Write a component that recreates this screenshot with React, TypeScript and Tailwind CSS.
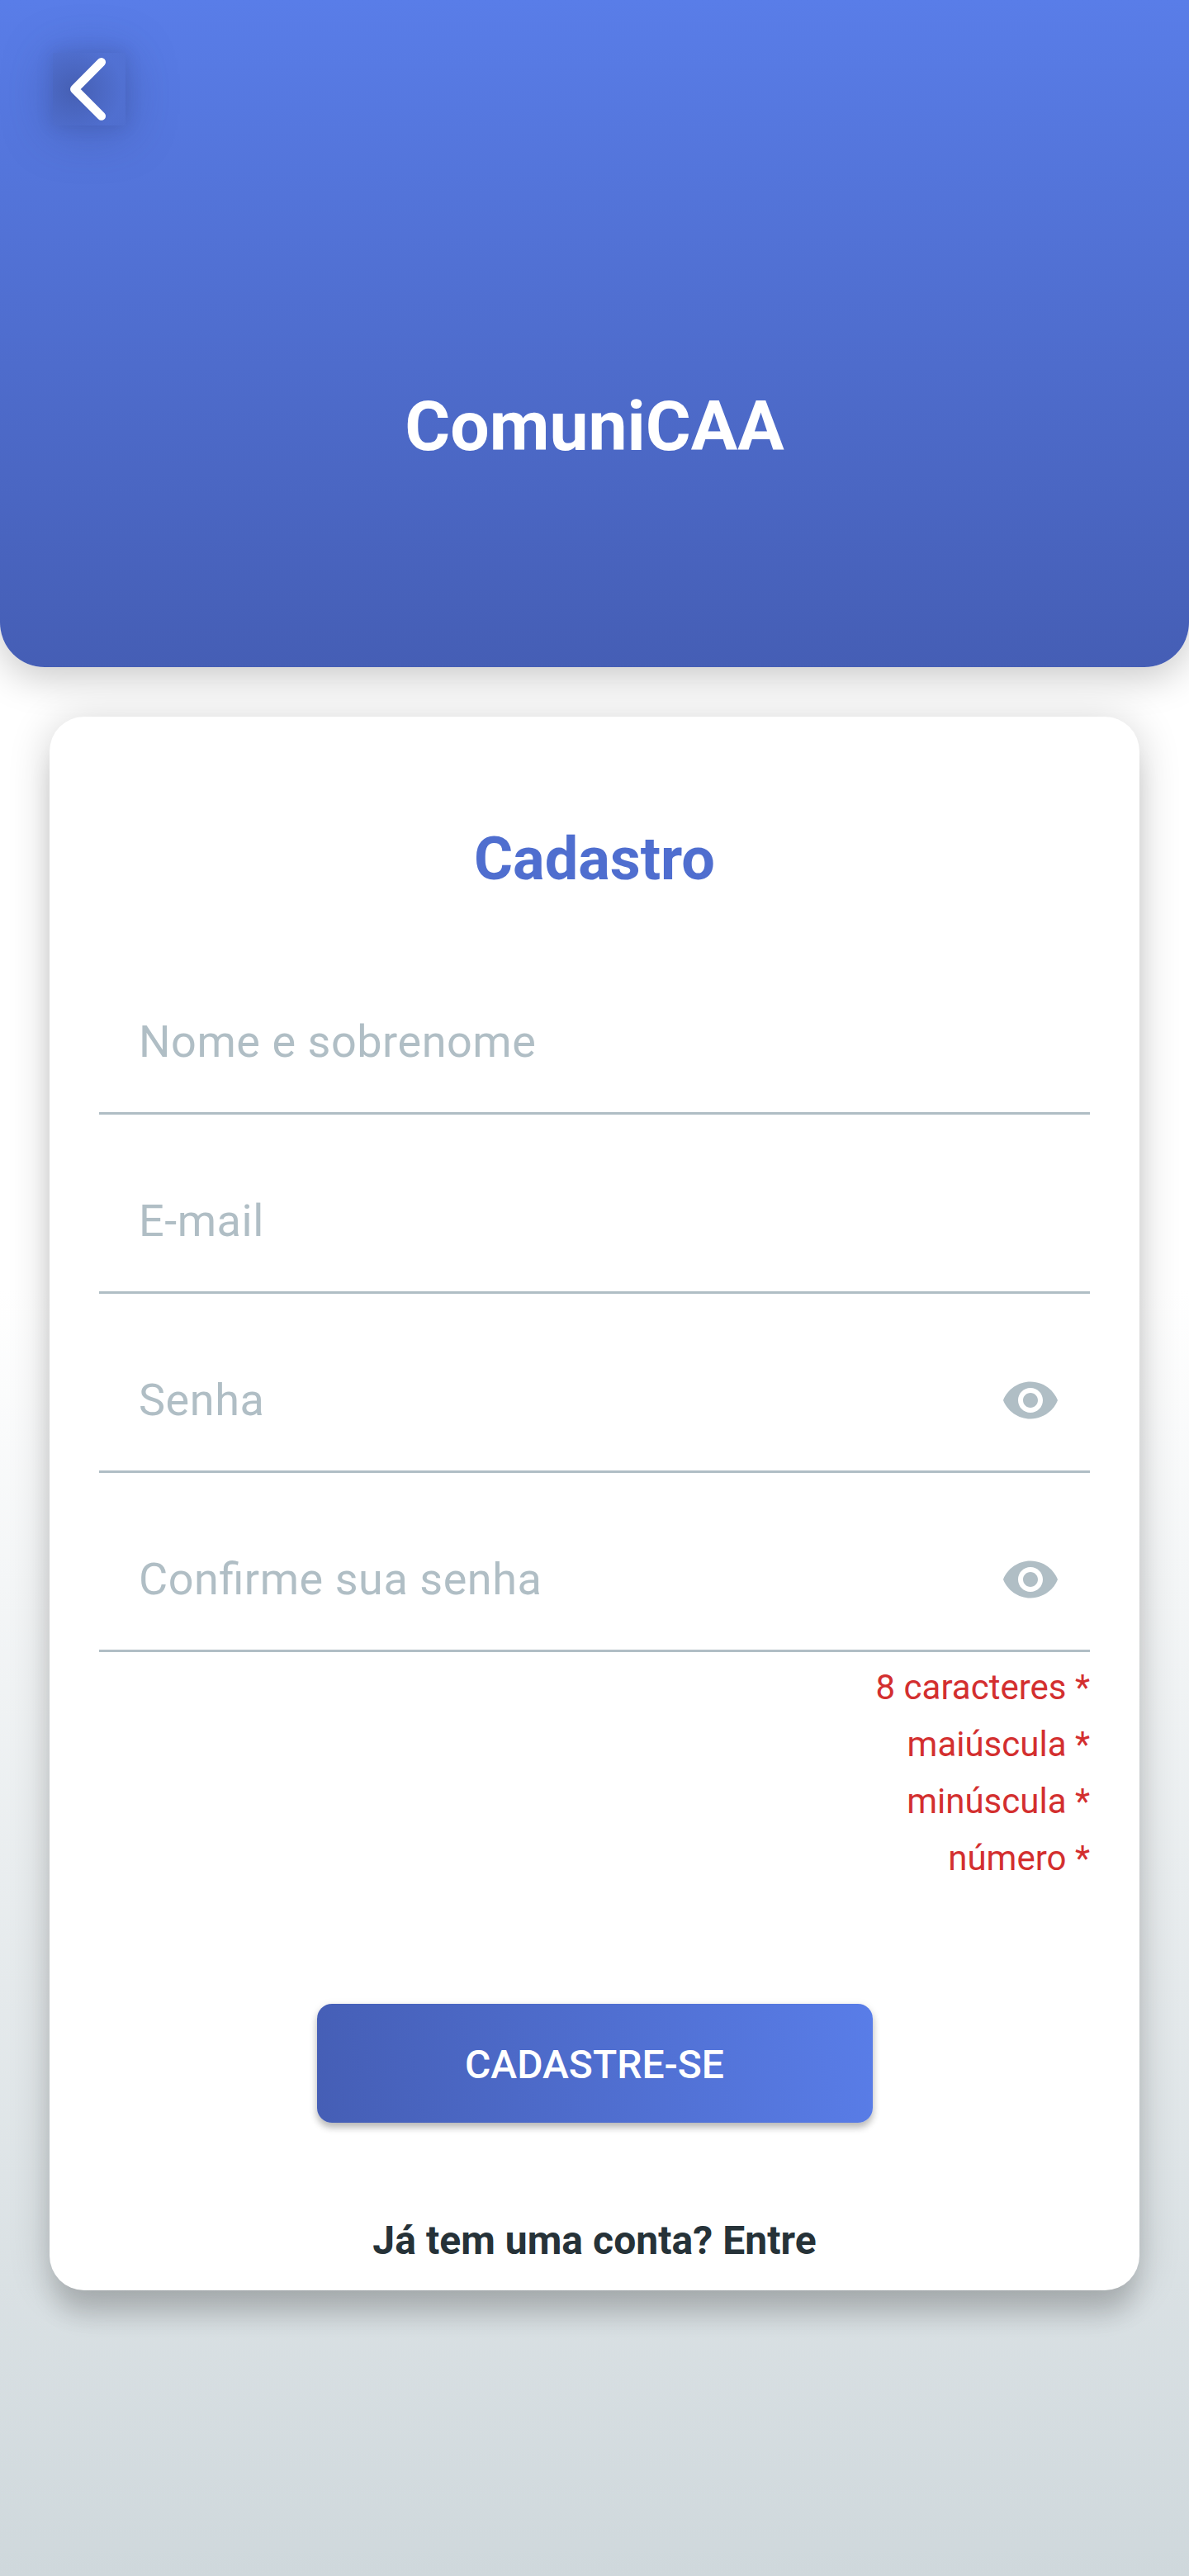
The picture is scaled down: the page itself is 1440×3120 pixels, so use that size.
const fields = [
  { label: "Nome e sobrenome", secret: false },
  { label: "E-mail", secret: false },
  { label: "Senha", secret: true },
  { label: "Confirme sua senha", secret: true },
];

const rules = ["8 caracteres *", "maiúscula *", "minúscula *", "número *"];

function EyeIcon() {
  return (
    <svg viewBox="0 0 24 24" className="mt-[93px] mr-9 size-[72px] shrink-0 fill-[#b0bec5]">
      <path d="M12 4.5C7 4.5 2.73 7.61 1 12c1.73 4.39 6 7.5 11 7.5s9.27-3.11 11-7.5c-1.73-4.39-6-7.5-11-7.5zM12 17c-2.76 0-5-2.24-5-5s2.24-5 5-5 5 2.24 5 5-2.24 5-5 5zm0-8c-1.66 0-3 1.34-3 3s1.34 3 3 3 3-1.34 3-3-1.34-3-3-3z" />
    </svg>
  );
}

function Field({ label, secret }: { label: string; secret: boolean }) {
  return (
    <div className="flex h-[217px] items-start justify-between border-b-3 border-[#b0bec5]">
      <span className="mt-24 ml-12 text-[54px] leading-[65px] tracking-[0.54px] text-[#b0bec5] [font-feature-settings:'liga'_1]">{label}</span>
      {secret && <EyeIcon />}
    </div>
  );
}

export default function App() {
  return (
    <div className="h-[3120px] w-[1440px] overflow-hidden bg-[linear-gradient(to_bottom,#ffffff_50%,#cfd8dc_100%)] font-[Roboto,sans-serif]">
      <header className="h-[808px] rounded-b-[54px] bg-[linear-gradient(to_bottom,#597de8,#455eb5)] px-16 pt-16 shadow-[0_12px_48px_rgba(0,0,0,0.22)]">
        <button className="block size-[88px] bg-[radial-gradient(circle_at_30%_50%,rgba(50,65,125,0.46),rgba(50,65,125,0.16)_75%)] shadow-[0_0_18px_rgba(50,65,125,0.2),0_6px_60px_rgba(50,65,125,0.4)]">
          <svg viewBox="0 0 88 88" className="size-[88px] fill-none stroke-white">
            <path d="M58.8 11.3 26.3 44l32.5 32.6" strokeWidth="10.5" strokeLinecap="round" strokeLinejoin="round" />
          </svg>
        </button>
        <h1 className="mt-[315px] text-center text-[84px] leading-[100px] font-bold text-white">ComuniCAA</h1>
      </header>

      <main className="mx-[60px] mt-[60px] h-[1906px] rounded-[42px] bg-white px-[60px] pt-[131px] shadow-[0_36px_30px_-6px_rgba(0,0,0,0.14),0_6px_50px_rgba(0,0,0,0.19)]">
        <h2 className="mb-[50px] text-center text-[72px] leading-[84px] font-bold text-[#4f6ecf]">Cadastro</h2>
        {fields.map((f) => (
          <Field key={f.label} {...f} />
        ))}
        <ul className="mt-2 text-right text-[42px] leading-[69px] text-[#d32f2f]">
          {rules.map((r) => (
            <li key={r}>{r}</li>
          ))}
        </ul>
        <button className="mx-auto mt-[142px] flex h-36 w-[673px] items-center justify-center rounded-[18px] bg-[linear-gradient(80deg,#455eb5,#597de8)] pt-[3px] text-[48px] font-medium text-white shadow-[0_6px_9px_rgba(0,0,0,0.24),0_2px_12px_rgba(0,0,0,0.08)]">
          CADASTRE-SE
        </button>
        <p className="mt-[111px] text-center text-[48px] leading-[64px] font-bold tracking-[0.05px] text-[#263238]">Já tem uma conta? Entre</p>
      </main>
    </div>
  );
}
